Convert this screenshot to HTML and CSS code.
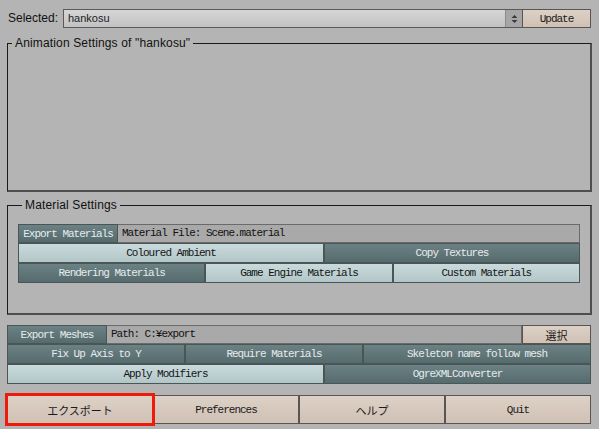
FILE: index.html
```html
<!DOCTYPE html>
<html>
<head>
<meta charset="utf-8">
<link rel="stylesheet" href="styles.css">
</head>
<body>
<div class="app">
  <div class="sel-row">
    <span class="sel-label">Selected:</span>
    <div class="dropdown">
      <span class="dd-text">hankosu</span>
      <span class="dd-spin">
        <svg width="9" height="10" viewBox="0 0 9 10"><path d="M4.5 1 L7.5 4 L1.5 4 Z M4.5 9 L7.5 6 L1.5 6 Z" fill="#3a3a3a"/></svg>
      </span>
    </div>
    <div class="btn beige upd">Update</div>
  </div>

  <fieldset class="group anim">
    <legend>Animation Settings of "hankosu"</legend>
  </fieldset>

  <fieldset class="group mat">
    <legend>Material Settings</legend>
    <div class="block">
      <div class="brow">
        <div class="btn dark w100">Export Materials</div>
        <div class="field">Material File: Scene.material</div>
      </div>
      <div class="brow">
        <div class="btn light mw306">Coloured Ambient</div>
        <div class="btn dark grow">Copy Textures</div>
      </div>
      <div class="brow">
        <div class="btn dark grow">Rendering Materials</div>
        <div class="btn light grow">Game Engine Materials</div>
        <div class="btn light grow">Custom Materials</div>
      </div>
    </div>
  </fieldset>

  <div class="block mesh">
    <div class="brow">
      <div class="btn dark w100">Export Meshes</div>
      <div class="field">Path: C:¥export</div>
      <div class="btn beige jp sel">選択</div>
    </div>
    <div class="brow">
      <div class="btn dark w178">Fix Up Axis to Y</div>
      <div class="btn dark w178">Require Materials</div>
      <div class="btn dark grow">Skeleton name follow mesh</div>
    </div>
    <div class="brow">
      <div class="btn light w317">Apply Modifiers</div>
      <div class="btn dark grow">OgreXMLConverter</div>
    </div>
  </div>

  <div class="bottom">
    <div class="btn beige big jp hl">エクスポート</div>
    <div class="btn beige big">Preferences</div>
    <div class="btn beige big jp">ヘルプ</div>
    <div class="btn beige big">Quit</div>
  </div>
</div>
</body>
</html>
```

FILE: styles.css
```css
html, body {
  margin: 0;
  padding: 0;
  background: #b4b4b4;
}
.app {
  width: 599px;
  height: 429px;
  box-sizing: border-box;
  padding: 9px 7px 0 7px;
  font-family: "Liberation Sans", Arial, sans-serif;
  color: #111;
}
.sel-row {
  display: flex;
  height: 19px;
  align-items: stretch;
  margin-right: 1px;
}
.sel-label {
  width: 56px;
  font-size: 12px;
  line-height: 19px;
  padding-left: 1px;
  box-sizing: border-box;
}
.dropdown {
  flex: 1;
  display: flex;
  border: 1px solid #5a5a5a;
  border-right: none;
  background: linear-gradient(#d6d6d6, #c2c2c2);
}
.dd-text {
  flex: 1;
  font-size: 11px;
  line-height: 17px;
  padding-left: 4px;
  color: #222;
}
.dd-spin {
  width: 16px;
  background: #a6a6a6;
  display: flex;
  align-items: center;
  justify-content: center;
  border-left: 1px solid #8a8a8a;
}
.btn {
  box-sizing: border-box;
  display: flex;
  align-items: center;
  justify-content: center;
  font-family: "Liberation Mono", monospace;
  font-size: 11px;
  letter-spacing: -1px;
  white-space: nowrap;
  border: 1px solid #4a5556;
}
.dark {
  background: linear-gradient(#6c8184, #566b6e);
  color: #e6ecec;
}
.light {
  background: linear-gradient(#c9dadc, #b2c6c8);
  color: #151515;
}
.beige {
  background: linear-gradient(#ddd0c5, #cfc1b4);
  color: #1a1a1a;
  border-color: #5a5452;
}
.jp {
  font-family: "Noto Sans CJK JP", sans-serif;
  letter-spacing: 0;
}
.upd {
  width: 69px;
}
.group {
  margin: 0;
  padding: 0;
  min-width: 0;
  border-top: 1px solid #1a1a1a;
  border-left: 1px solid #1a1a1a;
  border-right: 2px solid #4e4e4e;
  border-bottom: 2px solid #4e4e4e;
}
.group legend {
  font-family: "Liberation Sans", Arial, sans-serif;
  font-size: 12px;
  line-height: 14px;
  padding: 0 3px 0 3px;
  margin-left: 4px;
  letter-spacing: 0.15px;
}
.anim {
  margin-top: 8px;
  height: 156px;
  box-sizing: border-box;
}
.mat {
  margin-top: 6px;
  padding: 12px 10px 30px 10px;
}
.block {
  display: flex;
  flex-direction: column;
}
.brow {
  display: flex;
  height: 20px;
}
.brow:first-child {
  height: 19px;
}
.field {
  flex: 1;
  box-sizing: border-box;
  background: #a9a9a9;
  border: 1px solid #6a6a6a;
  border-left: none;
  font-family: "Liberation Mono", monospace;
  font-size: 11px;
  letter-spacing: -1px;
  line-height: 17px;
  padding-left: 4px;
  color: #111;
  white-space: nowrap;
}
.w100 { width: 100px; }
.mw306 { width: 306px; }
.w178 { width: 178px; }
.w317 { width: 317px; }
.grow { flex: 1; }
.sel { width: 69px; }
.mesh {
  margin-top: 10px;
  margin-right: 1px;
}
.bottom {
  display: flex;
  margin-top: 11px;
  margin-right: 1px;
  height: 29px;
}
.big {
  flex: 1;
}
.hl {
  outline: 3px solid #ee1a0c;
  outline-offset: -1px;
  position: relative;
  z-index: 1;
}
```
